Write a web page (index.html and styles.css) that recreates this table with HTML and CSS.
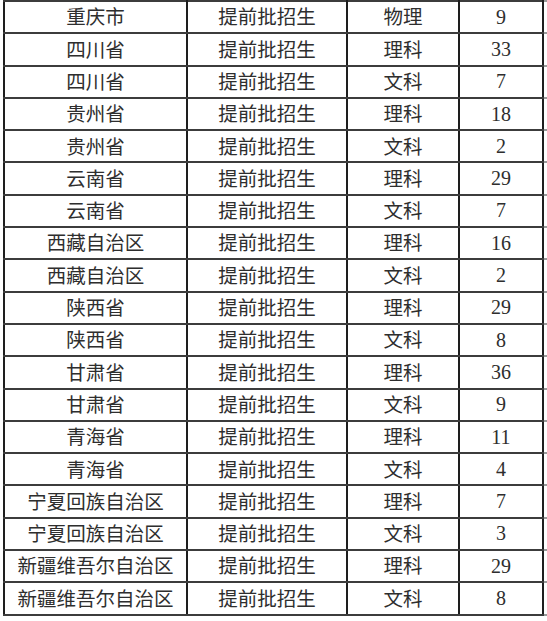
FILE: index.html
```html
<!DOCTYPE html>
<html lang="zh-CN">
<head>
<meta charset="utf-8">
<title>提前批招生计划</title>
<link rel="stylesheet" href="styles.css">
</head>
<body>
<table class="plan">
<colgroup>
<col class="c-prov"><col class="c-batch"><col class="c-subj"><col class="c-num"><col class="c-tail">
</colgroup>
<tbody>
<tr><td>重庆市</td><td>提前批招生</td><td>物理</td><td class="num">9</td><td class="tail"></td></tr>
<tr><td>四川省</td><td>提前批招生</td><td>理科</td><td class="num">33</td><td class="tail"></td></tr>
<tr><td>四川省</td><td>提前批招生</td><td>文科</td><td class="num">7</td><td class="tail"></td></tr>
<tr><td>贵州省</td><td>提前批招生</td><td>理科</td><td class="num">18</td><td class="tail"></td></tr>
<tr><td>贵州省</td><td>提前批招生</td><td>文科</td><td class="num">2</td><td class="tail"></td></tr>
<tr><td>云南省</td><td>提前批招生</td><td>理科</td><td class="num">29</td><td class="tail"></td></tr>
<tr><td>云南省</td><td>提前批招生</td><td>文科</td><td class="num">7</td><td class="tail"></td></tr>
<tr><td>西藏自治区</td><td>提前批招生</td><td>理科</td><td class="num">16</td><td class="tail"></td></tr>
<tr><td>西藏自治区</td><td>提前批招生</td><td>文科</td><td class="num">2</td><td class="tail"></td></tr>
<tr><td>陕西省</td><td>提前批招生</td><td>理科</td><td class="num">29</td><td class="tail"></td></tr>
<tr><td>陕西省</td><td>提前批招生</td><td>文科</td><td class="num">8</td><td class="tail"></td></tr>
<tr><td>甘肃省</td><td>提前批招生</td><td>理科</td><td class="num">36</td><td class="tail"></td></tr>
<tr><td>甘肃省</td><td>提前批招生</td><td>文科</td><td class="num">9</td><td class="tail"></td></tr>
<tr><td>青海省</td><td>提前批招生</td><td>理科</td><td class="num">11</td><td class="tail"></td></tr>
<tr><td>青海省</td><td>提前批招生</td><td>文科</td><td class="num">4</td><td class="tail"></td></tr>
<tr><td>宁夏回族自治区</td><td>提前批招生</td><td>理科</td><td class="num">7</td><td class="tail"></td></tr>
<tr><td>宁夏回族自治区</td><td>提前批招生</td><td>文科</td><td class="num">3</td><td class="tail"></td></tr>
<tr><td>新疆维吾尔自治区</td><td>提前批招生</td><td>理科</td><td class="num">29</td><td class="tail"></td></tr>
<tr><td>新疆维吾尔自治区</td><td>提前批招生</td><td>文科</td><td class="num">8</td><td class="tail"></td></tr>
</tbody>
</table>
</body>
</html>
```
FILE: styles.css
```css
html, body {
  margin: 0;
  padding: 0;
  background: #ffffff;
}

.plan {
  margin: 0 0 0 3px;
  border-collapse: collapse;
  table-layout: fixed;
  width: 544px;
  font-family: "Liberation Serif", "Noto Sans CJK SC", serif;
  font-size: 19.5px;
  color: #2e2e2e;
}

.c-prov { width: 183px; }
.c-batch { width: 160px; }
.c-subj { width: 112px; }
.c-num { width: 84px; }
.c-tail { width: 5px; }

.plan td {
  height: 28.3px;
  padding: 2px 0 0 0;
  text-align: center;
  vertical-align: middle;
  line-height: 1;
  border-top: 2px solid #3c3c3c;
  border-bottom: 2px solid #3c3c3c;
  border-left: 2px solid #1e1e1e;
  border-right: 2px solid #1e1e1e;
  white-space: nowrap;
}

.plan td.num {
  font-size: 20px;
  padding-top: 0;
  padding-bottom: 1px;
}

.plan td.tail {
  border-right: none;
  border-top-color: #9a9a9a;
  border-bottom-color: #9a9a9a;
}
```
